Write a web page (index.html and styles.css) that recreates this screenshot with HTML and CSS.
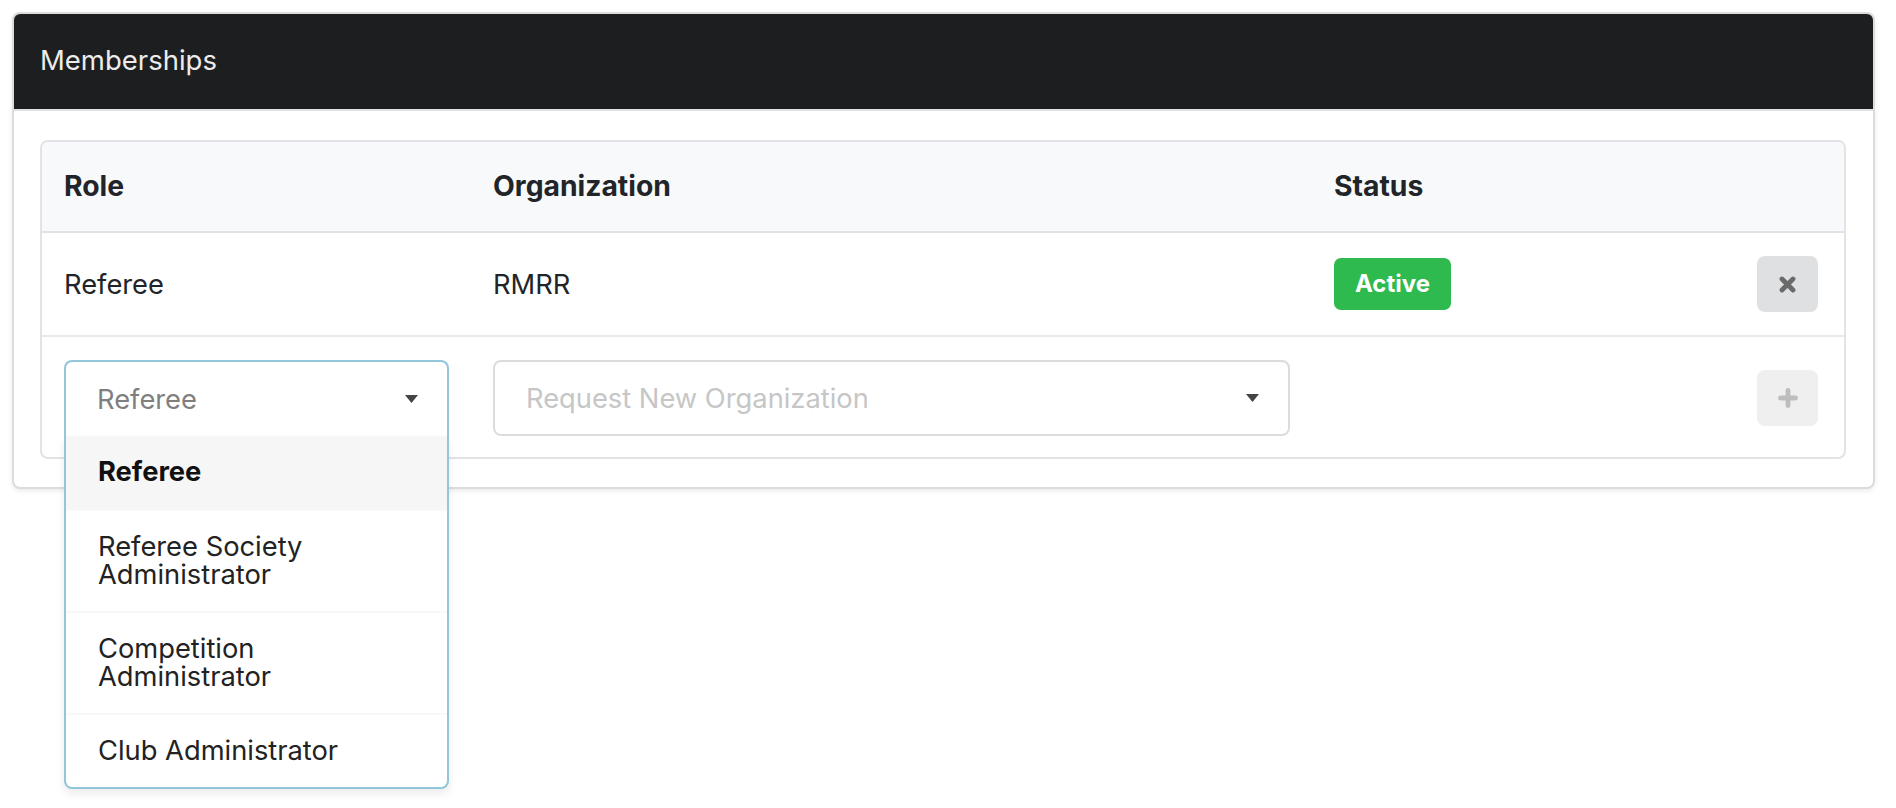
FILE: index.html
```html
<!DOCTYPE html>
<html>
  <head>
    <title>Memberships</title>
    <link rel="stylesheet" href="styles.css">
  </head>
  <body>
    <div class="card">
      <div class="card-header">Memberships</div>
      <div class="card-body">
        <div class="table-box">
          <div class="row head">
            <div class="cell">Role</div>
            <div class="cell">Organization</div>
            <div class="cell">Status</div>
            <div class="cell action"></div>
          </div>

          <div class="row">
            <div class="cell">Referee</div>
            <div class="cell">RMRR</div>
            <div class="cell"><span class="badge">Active</span></div>
            <div class="cell action">
              <button class="icon-btn remove" title="Remove">
                <svg width="17" height="17" viewBox="0 0 17 17">
                  <path d="M3 3 L14 14 M14 3 L3 14" stroke="#6a6a6a" stroke-width="4.8" stroke-linecap="round" fill="none"/>
                </svg>
              </button>
            </div>
          </div>

          <div class="row last">
            <div class="cell">
              <div class="select open">
                <div class="select-control">
                  <span class="select-value">Referee</span>
                  <svg class="caret" width="13" height="8" viewBox="0 0 13 8"><path d="M0 0 H13 L6.5 8 Z" fill="#444"/></svg>
                </div>
                <div class="select-menu">
                  <div class="option selected">Referee</div>
                  <div class="option">Referee Society Administrator</div>
                  <div class="option">Competition Administrator</div>
                  <div class="option">Club Administrator</div>
                </div>
              </div>
            </div>
            <div class="cell">
              <div class="select">
                <div class="select-control">
                  <span class="select-placeholder">Request New Organization</span>
                  <svg class="caret" width="13" height="8" viewBox="0 0 13 8"><path d="M0 0 H13 L6.5 8 Z" fill="#444"/></svg>
                </div>
              </div>
            </div>
            <div class="cell"></div>
            <div class="cell action">
              <button class="icon-btn add" title="Add" disabled>
                <svg width="20" height="20" viewBox="0 0 20 20">
                  <path d="M10 2.5 V17.5 M2.5 10 H17.5" stroke="#bdbdbd" stroke-width="4.8" stroke-linecap="round" fill="none"/>
                </svg>
              </button>
            </div>
          </div>
        </div>
      </div>
    </div>
  </body>
</html>
```

FILE: styles.css
```css
html,
body {
  height: 100%;
}

body {
  box-sizing: border-box;
  margin: 0;
  padding: 12px 21px 12px 12px;
  font-family: Inter, "Noto Sans", sans-serif;
  font-size: 27.3px;
  color: #212529;
  background: #fff;
}

.card {
  border: 2px solid #dcdcdc;
  border-radius: 8px;
  box-shadow: 0 2px 5px rgba(0, 0, 0, 0.08);
  background: #fff;
}

.card-header {
  background: #1d1e20;
  color: #ececec;
  font-size: 27.5px;
  font-weight: 400;
  line-height: 39px;
  padding: 27px 26px 29px;
  border-radius: 6px 6px 0 0;
  border-bottom: 2px solid #e2e2e2;
}

.card-body {
  padding: 29px 27px 28px 26px;
}

.table-box {
  border: 2px solid #e1e3e6;
  border-radius: 8px;
}

.row {
  display: grid;
  grid-template-columns: 429px 841px 1fr 110px;
  align-items: center;
  border-bottom: 2px solid #e8e9eb;
}

.row.last {
  border-bottom: none;
}

.row.head {
  background: #f8f9fa;
  font-weight: 700;
  font-size: 28.3px;
  border-bottom: 2px solid #e0e2e5;
  border-radius: 6px 6px 0 0;
}

.cell {
  padding: 23px 22px;
  line-height: 29px;
}

.row.last .cell {
  padding-bottom: 21px;
}

.head .cell {
  padding: 30px 22px;
}

.row .cell.action {
  display: flex;
  justify-content: flex-end;
  padding-right: 26px;
}

.badge {
  display: inline-block;
  background: #2fba4f;
  color: #fff;
  font-size: 24px;
  font-weight: 700;
  line-height: 52px;
  padding: 0 21px;
  border-radius: 7px;
}

.icon-btn {
  width: 61px;
  height: 56px;
  border: none;
  border-radius: 8px;
  display: flex;
  align-items: center;
  justify-content: center;
  padding: 0;
}

.icon-btn.remove {
  background: #dfe0e2;
}

.icon-btn.add {
  background: #efefef;
}

.select {
  position: relative;
}

.select-control {
  height: 72px;
  border: 2px solid #dcdcdc;
  border-radius: 8px;
  display: flex;
  align-items: center;
  justify-content: space-between;
  padding: 0 29px 0 31px;
}

.select-value {
  color: #7f7f7f;
}

.select-placeholder {
  color: #c6c6c6;
}

.select.open .select-control {
  border-color: #93c6db;
  border-bottom: none;
  border-radius: 8px 8px 0 0;
  height: 74px;
}

.select-menu {
  position: absolute;
  top: 100%;
  left: 0;
  right: 0;
  z-index: 5;
  background: #fff;
  border: 2px solid #93c6db;
  border-top: none;
  border-radius: 0 0 8px 8px;
  box-shadow: 0 5px 8px rgba(0, 0, 0, 0.08);
}

.option {
  padding: 22px 30px 22px 32px;
  line-height: 28px;
  color: #222;
  border-top: 2px solid #f8f8f8;
}

.option:first-child {
  border-top: none;
  padding-bottom: 23px;
}

.option.selected {
  background: #f6f6f6;
  font-weight: 700;
  color: #111;
}
```
